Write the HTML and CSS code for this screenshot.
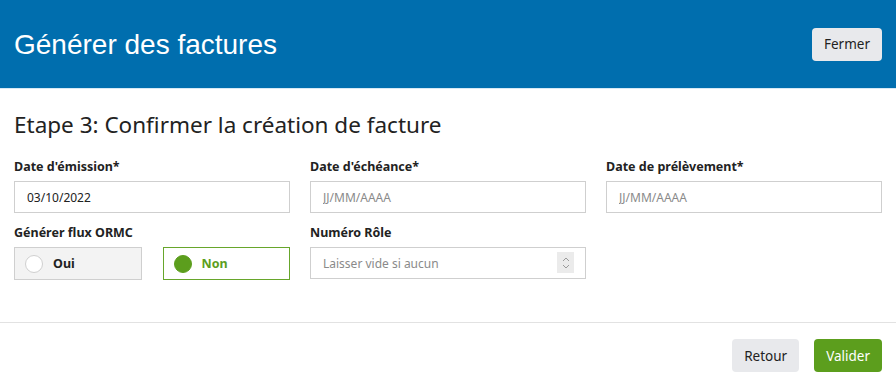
FILE: index.html
```html
<!DOCTYPE html>
<html lang="fr">
<head>
    <meta charset="UTF-8">
    <meta name="viewport" content="width=device-width, initial-scale=1.0">
    <title>Générer des factures</title>
    <link rel="stylesheet" href="styles.css">
</head>
<body>
    <div class="modal">
        <div class="modal-header">
            <h1>Générer des factures</h1>
            <button class="btn btn-light">Fermer</button>
        </div>

        <div class="modal-body">
            <h2>Etape 3: Confirmer la création de facture</h2>
            <div class="form-grid">
                <div class="field">
                    <label>Date d'émission*</label>
                    <input type="text" value="03/10/2022">
                </div>
                <div class="field">
                    <label>Date d'échéance*</label>
                    <input type="text" placeholder="JJ/MM/AAAA">
                </div>
                <div class="field">
                    <label>Date de prélèvement*</label>
                    <input type="text" placeholder="JJ/MM/AAAA">
                </div>
                <div class="field">
                    <label>Générer flux ORMC</label>
                    <div class="toggle-group">
                        <div class="toggle"><span class="dot"></span>Oui</div>
                        <div class="toggle toggle-on"><span class="dot"></span>Non</div>
                    </div>
                </div>
                <div class="field">
                    <label>Numéro Rôle</label>
                    <div class="number-input">
                        <input type="text" placeholder="Laisser vide si aucun">
                        <span class="spinner">
                            <svg width="10" height="16" viewBox="0 0 10 16">
                                <path d="M2 6 L5 3 L8 6" fill="none" stroke="#9a9a9a" stroke-width="1"/>
                                <path d="M2 10 L5 13 L8 10" fill="none" stroke="#9a9a9a" stroke-width="1"/>
                            </svg>
                        </span>
                    </div>
                </div>
            </div>
        </div>

        <div class="modal-footer">
            <button class="btn btn-light">Retour</button>
            <button class="btn btn-green">Valider</button>
        </div>
    </div>
</body>
</html>
```

FILE: styles.css
```css
* {
    margin: 0;
    padding: 0;
    box-sizing: border-box;
}

body {
    font-family: 'Noto Sans', 'Open Sans', sans-serif;
    color: #222;
    background: #fff;
}

.modal-header {
    height: 89px;
    background-color: #006eae;
    border-bottom: 1px solid #d6e9f5;
    display: flex;
    align-items: center;
    justify-content: space-between;
    padding: 0 14px 0 14px;
}

.modal-header h1 {
    font-family: 'Liberation Sans', Arial, sans-serif;
    font-weight: normal;
    font-size: 28px;
    color: #fff;
    margin-top: 1px;
}

.btn {
    font-family: 'Noto Sans', sans-serif;
    font-size: 13.5px;
    border: none;
    border-radius: 4px;
    height: 33px;
    padding: 0 12px;
    cursor: pointer;
}

.btn-light {
    background-color: #e8e9ec;
    color: #222;
}

.btn-green {
    background-color: #5c9e1d;
    color: #fff;
}

.modal-body {
    padding: 22px 14px 0 14px;
    height: 234px;
    border-bottom: 1px solid #e2e2e2;
}

.modal-body h2 {
    font-weight: normal;
    font-size: 22.5px;
    line-height: 28px;
    color: #222;
    margin-bottom: 19px;
}

.form-grid {
    display: grid;
    grid-template-columns: repeat(3, 1fr);
    column-gap: 20px;
    row-gap: 11px;
}

.field label {
    display: block;
    font-weight: bold;
    font-size: 12.5px;
    margin-bottom: 6px;
    height: 17px;
}

.field input {
    width: 100%;
    height: 32px;
    border: 1px solid #cfcfcf;
    padding: 0 12px;
    font-family: 'Noto Sans', sans-serif;
    font-size: 12px;
    color: #222;
    outline: none;
}

.field input::placeholder {
    color: #8a8a8a;
}

.toggle-group {
    display: flex;
    gap: 21px;
}

.toggle {
    flex: 1;
    height: 33px;
    box-shadow: inset 0 0 0 1px #cfcfcf;
    background-color: #f3f3f3;
    display: flex;
    align-items: center;
    padding-left: 11px;
    font-weight: bold;
    font-size: 12.5px;
}

.toggle .dot {
    width: 18px;
    height: 18px;
    border-radius: 50%;
    border: 1px solid #d0d0d0;
    background: #fff;
    margin-right: 10px;
}

.toggle-on {
    background-color: #fff;
    box-shadow: inset 0 0 0 1px #67a62b;
    color: #5c9e1d;
}

.toggle-on .dot {
    background-color: #5c9e1d;
    border-color: #5c9e1d;
}

.number-input {
    position: relative;
}

.spinner {
    position: absolute;
    right: 12px;
    top: 5px;
    width: 17px;
    height: 21px;
    background: #ebebeb;
    display: flex;
    align-items: center;
    justify-content: center;
}

.modal-footer {
    display: flex;
    justify-content: flex-end;
    gap: 15px;
    padding: 16px 14px 0 14px;
}
```
